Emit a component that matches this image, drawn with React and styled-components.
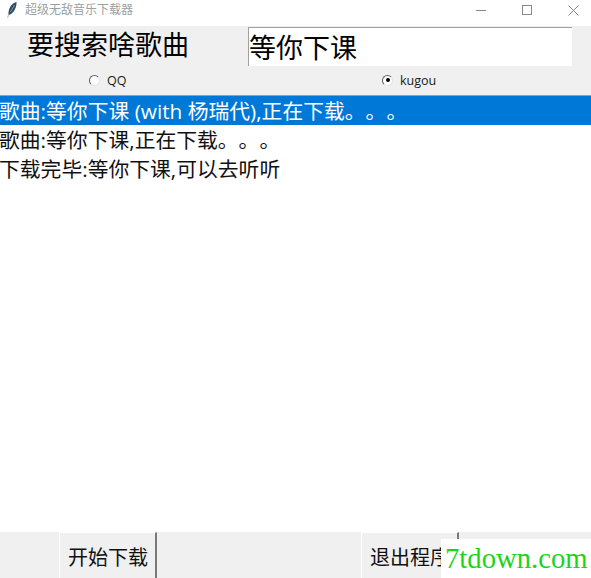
import React from "react";
import styled, { createGlobalStyle } from "styled-components";

const GlobalStyle = createGlobalStyle`
  html, body {
    margin: 0;
    padding: 0;
    background: #fff;
  }
`;

const cjk = `"Open Sans", "Noto Sans CJK SC", sans-serif`;

const Window = styled.div`
  position: relative;
  width: 591px;
  height: 578px;
  display: flex;
  flex-direction: column;
  overflow: hidden;
  background: #f0f0f0;
  font-family: ${cjk};
  color: #000;
  text-spacing-trim: space-all;
`;

const TitleBar = styled.div`
  height: 26px;
  flex: none;
  background: #fff;
  display: flex;
  align-items: flex-start;
`;

const Feather = styled.svg`
  width: 12px;
  height: 18px;
  margin: 1px 0 0 6px;
`;

const Title = styled.span`
  margin-left: 7px;
  font-size: 12px;
  line-height: 20px;
  color: #9a9f9f;
`;

const WinButtons = styled.div`
  margin-left: auto;
  margin-right: -5px;
  display: flex;
`;

const WinButton = styled.div`
  width: 46px;
  height: 20px;
  display: flex;
  align-items: center;
  justify-content: center;
  svg {
    display: block;
  }
`;

const SearchRow = styled.div`
  height: 40px;
  flex: none;
  display: flex;
  align-items: flex-end;
`;

const SearchLabel = styled.label`
  width: 248px;
  padding-left: 27px;
  box-sizing: border-box;
  font-size: 27px;
  line-height: 42px;
  flex: none;
`;

const SearchInput = styled.input`
  width: 324px;
  height: 39px;
  box-sizing: border-box;
  padding: 0 0 2px 0;
  border: 0;
  border-top: 1px solid #a0a0a0;
  border-left: 1px solid #a0a0a0;
  outline: none;
  background: #fff;
  font-family: ${cjk};
  font-size: 27px;
  color: #000;
`;

const RadioRow = styled.div`
  height: 29px;
  flex: none;
  display: flex;
  align-items: center;
  padding: 0 0 1px 89px;
  box-sizing: border-box;
`;

const RadioItem = styled.div`
  width: 293px;
  flex: none;
  display: flex;
  align-items: center;
  gap: 7px;
  font-size: 12.5px;
  color: #1a1a1a;
`;

const RadioMark = styled.span`
  width: 11px;
  height: 11px;
  box-sizing: border-box;
  border-radius: 50%;
  background: #fff;
  border: 1px solid;
  border-color: #5f5f5f #e4e4e4 #e4e4e4 #5f5f5f;
  display: flex;
  align-items: center;
  justify-content: center;
  &::after {
    content: "";
    width: 4px;
    height: 4px;
    border-radius: 50%;
    background: ${(p) => (p.$on ? "#000" : "transparent")};
  }
`;

const List = styled.div`
  flex: 1;
  min-height: 0;
  background: #fff;
  border-top: 1px solid #a0a0a0;
`;

const ListRow = styled.div`
  height: 29px;
  line-height: 31px;
  font-size: 20.8px;
  white-space: nowrap;
  overflow: hidden;
  text-indent: -1px;
  background: ${(p) => (p.$selected ? "#0078d7" : "#fff")};
  color: ${(p) => (p.$selected ? "#fff" : "#111")};
`;

const BottomBar = styled.div`
  height: 46px;
  flex: none;
  display: flex;
  align-items: flex-start;
  padding-left: 59px;
`;

const ActionButton = styled.button`
  width: ${(p) => p.$width}px;
  height: 50px;
  flex: none;
  margin-left: ${(p) => p.$gap || 0}px;
  box-sizing: border-box;
  padding: 0 0 2px 8px;
  border: 0;
  border-top: 1px solid #fff;
  border-left: 1px solid #fff;
  border-right: 2px solid #7a7a7a;
  background: #f0f0f0;
  font-family: ${cjk};
  font-size: 20px;
  color: #111;
  text-align: left;
  white-space: nowrap;
`;

const Watermark = styled.div`
  position: absolute;
  right: 0;
  bottom: 0;
  width: 150px;
  height: 39px;
  background: #fff;
  color: #1cd41c;
  font-family: "Liberation Serif", serif;
  font-size: 28.7px;
  line-height: 38px;
  padding-left: 4px;
  box-sizing: border-box;
  white-space: nowrap;
`;

export default function App() {
  return (
    <Window>
      <GlobalStyle />
      <TitleBar>
        <Feather viewBox="0 0 12 18">
          <path d="M10.5 1 C6.5 2 3 6 2.6 11 L2.4 14 L4 13.6 C7.8 11.5 10.8 6.5 10.5 1 Z" fill="#2f4d5f" />
          <path d="M8.5 4 L4.5 11 M2.4 14 L1.6 17" stroke="#8fb0c4" strokeWidth="0.8" fill="none" />
        </Feather>
        <Title>超级无敌音乐下载器</Title>
        <WinButtons>
          <WinButton>
            <svg width="10" height="10" viewBox="0 0 10 10">
              <path d="M0 5.5 H10" stroke="#888" strokeWidth="1" />
            </svg>
          </WinButton>
          <WinButton>
            <svg width="10" height="10" viewBox="0 0 10 10">
              <rect x="0.5" y="0.5" width="9" height="9" fill="none" stroke="#888" strokeWidth="1" />
            </svg>
          </WinButton>
          <WinButton>
            <svg width="11" height="11" viewBox="0 0 11 11">
              <path d="M0.5 0.5 L10.5 10.5 M10.5 0.5 L0.5 10.5" stroke="#888" strokeWidth="1" />
            </svg>
          </WinButton>
        </WinButtons>
      </TitleBar>
      <SearchRow>
        <SearchLabel>要搜索啥歌曲</SearchLabel>
        <SearchInput readOnly value="等你下课" />
      </SearchRow>
      <RadioRow>
        <RadioItem>
          <RadioMark />
          QQ
        </RadioItem>
        <RadioItem>
          <RadioMark $on />
          kugou
        </RadioItem>
      </RadioRow>
      <List>
        <ListRow $selected>歌曲:等你下课 (with 杨瑞代),正在下载。。。</ListRow>
        <ListRow>歌曲:等你下课,正在下载。。。</ListRow>
        <ListRow>下载完毕:等你下课,可以去听听</ListRow>
      </List>
      <BottomBar>
        <ActionButton $width={98}>开始下载</ActionButton>
        <ActionButton $width={98} $gap={204}>退出程序</ActionButton>
      </BottomBar>
      <Watermark>7tdown.com</Watermark>
    </Window>
  );
}
